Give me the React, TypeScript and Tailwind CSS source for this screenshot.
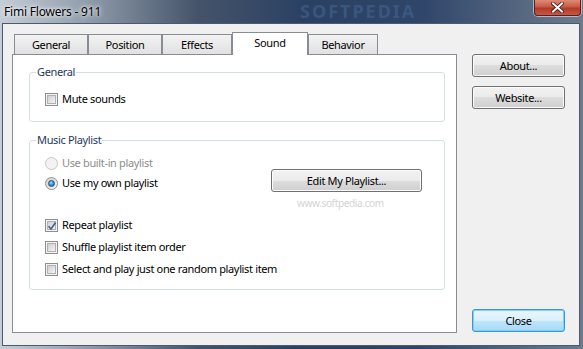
import React from 'react';

const font = "font-['Noto_Sans',sans-serif]";

function Checkbox({ checked = false, label }: { checked?: boolean; label: string }) {
  return (
    <div className="flex items-center h-[16px]">
      <span className="relative w-[13px] h-[13px] border border-[#8e8f8f] bg-[#f4f4f4] p-[1px] shrink-0">
        <span className="block w-full h-full border border-[#aeb0b1] bg-[linear-gradient(135deg,#cfcfcf,#f4f4f4)]" />
        {checked && (
          <svg className="absolute left-[1px] top-[1px]" width="10" height="10" viewBox="0 0 10 10">
            <path d="M1.5 5.2 L4 8 L8.6 1.4" fill="none" stroke="#4a5f8f" strokeWidth="1.7" />
          </svg>
        )}
      </span>
      <span className="ml-[4px] text-black">{label}</span>
    </div>
  );
}

function Radio({ checked = false, disabled = false, label }: { checked?: boolean; disabled?: boolean; label: string }) {
  return (
    <div className="flex items-center h-[16px]">
      <span
        className={`flex items-center justify-center w-[13px] h-[13px] rounded-full border shrink-0 ${
          disabled
            ? 'border-[#c8c8c8] bg-[#f3f3f3]'
            : 'border-[#8e8f8f] bg-[linear-gradient(135deg,#d2d2d2,#f6f6f6)]'
        }`}
      >
        {checked && (
          <span className="w-[7px] h-[7px] rounded-full border border-[#1c5180] bg-[radial-gradient(circle_at_40%_35%,#9fe0fb,#2b8fd0_55%,#175a96)]" />
        )}
      </span>
      <span className={`ml-[4px] ${disabled ? 'text-[#8d8d8d]' : 'text-black'}`}>{label}</span>
    </div>
  );
}

function Button({ label, primary = false, className = '' }: { label: string; primary?: boolean; className?: string }) {
  return (
    <div
      className={`flex items-center justify-center h-[23px] rounded-[3px] border text-black ${
        primary
          ? 'border-[#3c95d4] bg-[linear-gradient(#eaf6fd_0%,#d9f0fc_50%,#bee6fd_50%,#a7d9f5_100%)] shadow-[inset_0_0_0_1px_#7fd0f5]'
          : 'border-[#707070] bg-[linear-gradient(#f2f2f2_0%,#ebebeb_50%,#dddddd_50%,#cfcfcf_100%)] shadow-[inset_0_0_0_1px_#fcfcfc]'
      } ${className}`}
    >
      {label}
    </div>
  );
}

function Group({ title, className, children }: { title: string; className: string; children: React.ReactNode }) {
  return (
    <div className={`relative rounded-[3px] border border-[#d5dfe5] ${className}`}>
      <span className="absolute left-[6px] top-[-9px] bg-white px-[1px] leading-[16px] text-[#1e395b]">{title}</span>
      {children}
    </div>
  );
}

const tabs = [
  { name: 'General', w: 'w-[74px]' },
  { name: 'Position', w: 'w-[74px]' },
  { name: 'Effects', w: 'w-[70px]' },
  { name: 'Sound', w: 'w-[76px]', active: true },
  { name: 'Behavior', w: 'w-[70px]' },
];

export default function App() {
  return (
    <div
      className={`${font} text-[11px] leading-[16px] tracking-[-0.35px] w-[583px] h-[349px] flex flex-col overflow-hidden bg-[linear-gradient(90deg,#c5cdd6_0%,#93a0ae_14%,#45536a_34%,#2b4163_52%,#2f4569_72%,#6d7b8e_100%)]`}
    >
      {/* title bar */}
      <div className="relative h-[23px] shrink-0 flex items-center pl-[4px]">
        <span className="text-[12px] tracking-[-0.2px] text-black [text-shadow:0_0_6px_#ffffff,0_0_3px_#ffffff]">
          Fimi Flowers - 911
        </span>
        <span className="absolute left-[300px] top-[1px] text-[18px] leading-[20px] font-bold tracking-[2px] text-[#4a6a96] opacity-50">
          SOFTPEDIA
        </span>
        <div className="absolute right-[2px] top-0 w-[47px] h-[16px] rounded-b-[4px] border border-t-0 border-[#5a1f18] bg-[linear-gradient(#e08a78_0%,#c85a44_45%,#b33a24_55%,#c4584a_100%)] shadow-[0_0_0_1px_rgba(255,255,255,0.5)] flex items-center justify-center">
          <svg width="13" height="11" viewBox="0 0 13 11">
            <path d="M2 1.5 L11 9.5 M11 1.5 L2 9.5" stroke="#3a1510" strokeWidth="3.6" strokeLinecap="square" />
            <path d="M2 1.5 L11 9.5 M11 1.5 L2 9.5" stroke="#ffffff" strokeWidth="2" strokeLinecap="square" />
          </svg>
        </div>
      </div>

      {/* client area */}
      <div className="flex-1 ml-[2px] mr-[3px] mb-[3px] border border-[#4d5a6c] bg-[#f0f0f0] flex">
        <div className="ml-[9px] pt-[8px] flex flex-col">
          <div className="flex items-end pl-[2px] h-[22px] relative z-10">
            {tabs.map((t) =>
              t.active ? (
                <div
                  key={t.name}
                  className={`${t.w} h-[23px] -mb-[1px] border border-b-0 border-[#898c95] bg-white flex justify-center pt-[2px] text-black`}
                >
                  {t.name}
                </div>
              ) : (
                <div
                  key={t.name}
                  className={`${t.w} h-[20px] border border-b-0 border-[#898c95] bg-[linear-gradient(#f2f2f2,#e1e1e1)] flex justify-center pt-[2px] text-black`}
                >
                  {t.name}
                </div>
              )
            )}
          </div>
          <div className="w-[445px] h-[279px] border border-[#898c95] bg-white pl-[16px] pt-[17px]">
            <Group title="General" className="w-[416px] h-[50px] pl-[15px] pt-[18px]">
              <Checkbox label="Mute sounds" />
            </Group>
            <Group title="Music Playlist" className="mt-[18px] w-[416px] h-[150px] pl-[15px] pt-[14px]">
              <div className="flex items-start">
                <div className="w-[226px] flex flex-col gap-[4px]">
                  <Radio disabled label="Use built-in playlist" />
                  <Radio checked label="Use my own playlist" />
                </div>
                <div className="relative mt-[14px]">
                  <Button label="Edit My Playlist..." className="w-[151px]" />
                  <span className="absolute left-[26px] top-[28px] text-[10px] leading-[12px] text-[#d4d4d4] whitespace-nowrap">
                    www.softpedia.com
                  </span>
                </div>
              </div>
              <div className="mt-[25px] flex flex-col gap-[6px]">
                <Checkbox checked label="Repeat playlist" />
                <Checkbox label="Shuffle playlist item order" />
                <Checkbox label="Select and play just one random playlist item" />
              </div>
            </Group>
          </div>
        </div>

        <div className="ml-[15px] pt-[30px] pb-[13px] flex flex-col w-[93px]">
          <Button label="About..." />
          <Button label="Website..." className="mt-[9px]" />
          <Button label="Close" primary className="mt-auto" />
        </div>
      </div>
    </div>
  );
}
